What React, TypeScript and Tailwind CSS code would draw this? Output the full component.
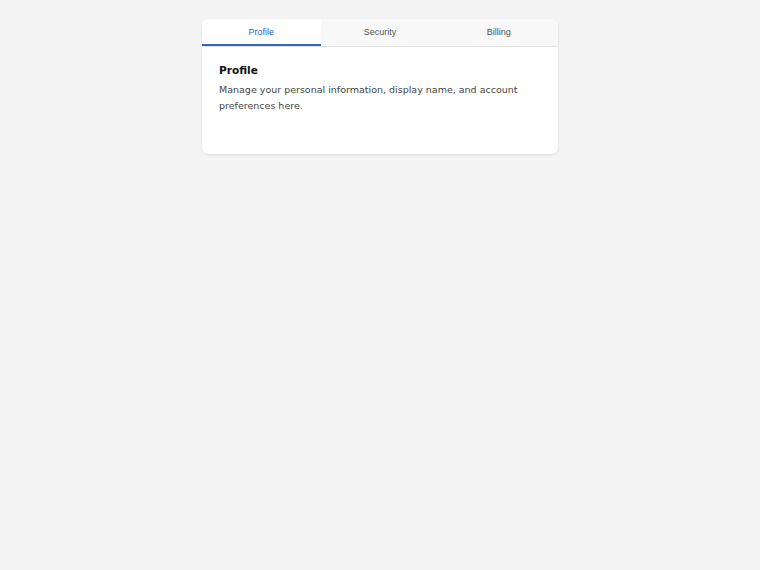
import { useState } from "react";

type Tab = { id: string; label: string; title: string; body: string };

const tabs: Tab[] = [
  {
    id: "profile",
    label: "Profile",
    title: "Profile",
    body: "Manage your personal information, display name, and account preferences here.",
  },
  {
    id: "security",
    label: "Security",
    title: "Security",
    body: "Update your password and configure two-factor authentication.",
  },
  {
    id: "billing",
    label: "Billing",
    title: "Billing",
    body: "Review invoices, payment methods and your current plan.",
  },
];

export default function App() {
  const [active, setActive] = useState("profile");
  const current = tabs.find((t) => t.id === active)!;

  return (
    <div className="min-h-[570px] w-full bg-[#f4f4f4] pt-[19px]">
      <div className="mx-auto w-[356px] overflow-hidden rounded-[6px] bg-white shadow-[0_1px_3px_rgba(0,0,0,0.10)]">
        <div className="flex border-b border-[#e2e2e2] bg-[#f8f8f8]">
          {tabs.map((t) => {
            const on = t.id === active;
            return (
              <button
                key={t.id}
                onClick={() => setActive(t.id)}
                className={
                  on
                    ? "flex h-[27px] flex-1 items-center justify-center border-b-2 border-[#3566b8] bg-white pt-[3px] font-['Liberation_Sans',Arial,sans-serif] text-[9px] text-[#2f62c4]"
                    : "flex h-[27px] flex-1 items-center justify-center border-b-2 border-transparent pt-[3px] font-['Liberation_Sans',Arial,sans-serif] text-[9px] text-[#555555]"
                }
              >
                {t.label}
              </button>
            );
          })}
        </div>
        <div className="px-[17px] pb-[40px] pt-[16px] font-['DejaVu_Sans',sans-serif]">
          <h2 className="text-[10.6px] font-bold leading-[14px] text-[#111111]">
            {current.title}
          </h2>
          <p className="mt-[5px] text-[9.5px] leading-[16px] text-[#444444]">
            {current.body}
          </p>
        </div>
      </div>
    </div>
  );
}
